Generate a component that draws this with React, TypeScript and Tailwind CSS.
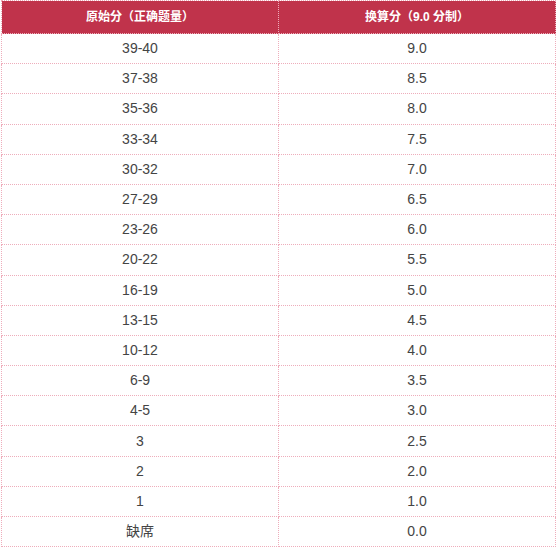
const rows: [string, string][] = [
  ["39-40", "9.0"],
  ["37-38", "8.5"],
  ["35-36", "8.0"],
  ["33-34", "7.5"],
  ["30-32", "7.0"],
  ["27-29", "6.5"],
  ["23-26", "6.0"],
  ["20-22", "5.5"],
  ["16-19", "5.0"],
  ["13-15", "4.5"],
  ["10-12", "4.0"],
  ["6-9", "3.5"],
  ["4-5", "3.0"],
  ["3", "2.5"],
  ["2", "2.0"],
  ["1", "1.0"],
  ["缺席", "0.0"],
];

export default function App() {
  return (
    <div className="w-[558px] h-[549px] bg-white font-['Liberation_Sans','Noto_Sans_CJK_JP',sans-serif]">
      <table className="ml-px w-[555px] border-collapse table-fixed">
        <thead>
          <tr className="h-[33px] bg-[#c0334b] text-white text-[12px] font-bold">
            <th className="border border-dotted border-[#eeadbb] font-bold">原始分（正确题量）</th>
            <th className="border border-dotted border-[#eeadbb] font-bold">换算分（9.0 分制）</th>
          </tr>
        </thead>
        <tbody>
          {rows.map(([raw, score]) => (
            <tr key={raw} className="h-[30.2px] text-[14px] text-[#444]">
              <td className="border border-dotted border-[#eeadbb] text-center">{raw}</td>
              <td className="border border-dotted border-[#eeadbb] text-center">{score}</td>
            </tr>
          ))}
        </tbody>
      </table>
    </div>
  );
}
